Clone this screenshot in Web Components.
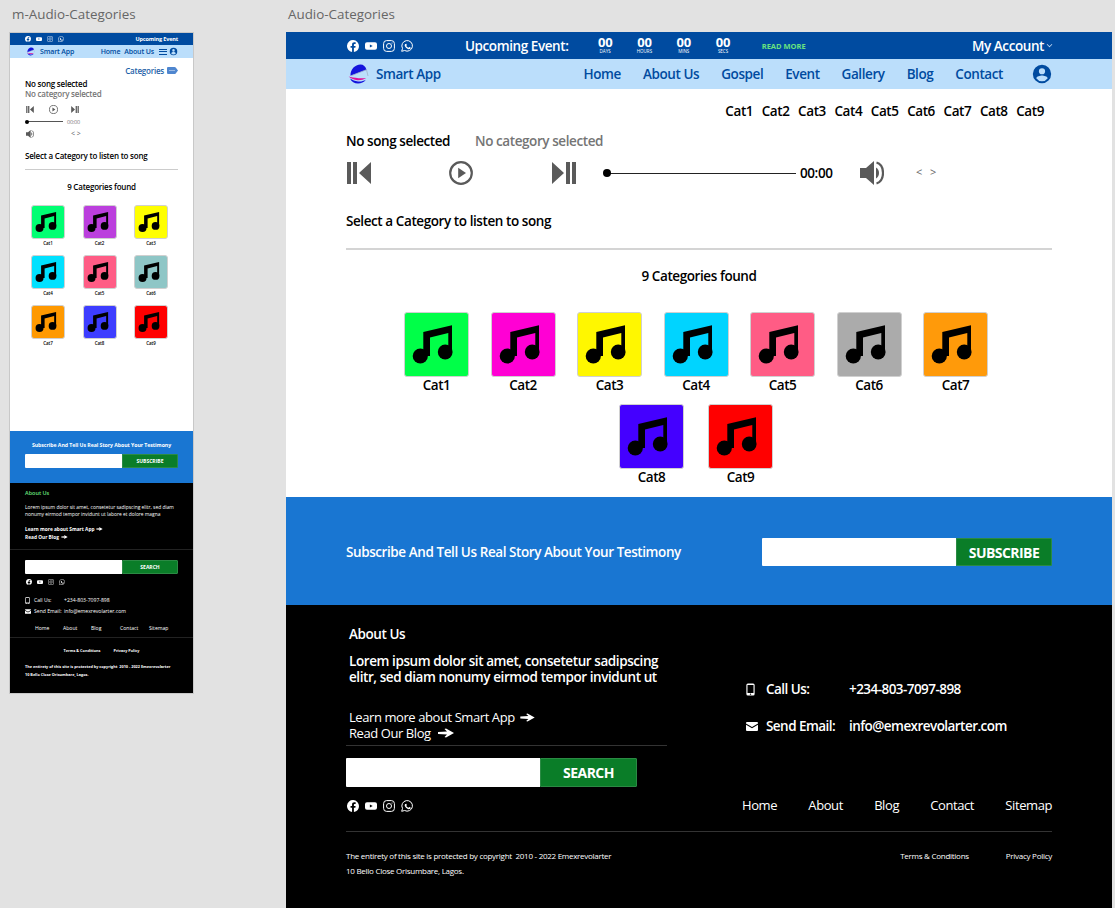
<!DOCTYPE html>
<html>
<head>
<meta charset="utf-8">
<title>Audio-Categories</title>
<style>
html, body { margin: 0; height: 908px; overflow: hidden; background: #e2e2e2; }
body { font-family: "Open Sans", "Noto Sans", sans-serif; }
</style>
</head>
<body>
<art-board></art-board>

<script>
const icons = {
    facebook: `<svg viewBox="0 0 24 24"><path fill="currentColor" d="M24 12a12 12 0 1 0-13.9 11.9v-8.4H7.1V12h3V9.400c0-3 1.800-4.700 4.500-4.700 1.300 0 2.700.2 2.700.2v3h-1.500c-1.500 0-2 .9-2 1.900V12h3.400l-.5 3.500h-2.900v8.400A12 12 0 0 0 24 12z"/></svg>`,
    youtube: `<svg viewBox="0 0 24 24"><path fill="currentColor" d="M4 4.500h16a4 4 0 0 1 4 4v7a4 4 0 0 1-4 4H4a4 4 0 0 1-4-4v-7a4 4 0 0 1 4-4z"/><path fill="var(--cut, #004ba0)" d="M9.800 8.800v6.400l5.600-3.200z"/></svg>`,
    instagram: `<svg viewBox="0 0 24 24" fill="none" stroke="currentColor" stroke-width="2"><rect x="1.200" y="1.200" width="21.600" height="21.600" rx="6"/><circle cx="12" cy="12" r="5"/><circle cx="18" cy="6" r="1.200" fill="currentColor" stroke="none"/></svg>`,
    whatsapp: `<svg viewBox="0 0 24 24"><path fill="none" stroke="currentColor" stroke-width="2" d="M1.400 22.600l1.600-5.800A10.600 10.600 0 1 1 7.200 21z"/><path fill="currentColor" d="M8.700 6.700c-.3 0-.8.100-1.200.6-.5.500-1.300 1.300-1.300 3s1.300 3.500 1.500 3.700c.2.200 2.500 4 6.300 5.400 3 1.100 3.700.5 4.400.4.700-.1 2.200-.9 2.500-1.800.3-.9.300-1.600.2-1.800-.1-.2-.3-.3-.7-.5l-2.400-1.200c-.3-.1-.6-.2-.8.200l-1.100 1.400c-.2.200-.4.300-.8.100-.4-.2-1.500-.6-2.900-1.800-1.100-1-1.800-2.100-2-2.500-.2-.4 0-.6.200-.8l.9-1.200c.1-.2.100-.4 0-.6l-1.100-2.600c-.3-.7-.5-.6-.7-.6z" transform="translate(2.400 2.400) scale(.8)"/></svg>`,
    user: `<svg viewBox="0 0 24 24"><path fill="currentColor" d="M12 2a10 10 0 1 0 0 20 10 10 0 0 0 0-20zm0 3.600a3.400 3.400 0 1 1 0 6.800 3.400 3.400 0 0 1 0-6.800zm0 14.200a7.800 7.800 0 0 1-6.300-3.300c.4-1.900 4.200-3 6.300-3s5.900 1.100 6.300 3a7.800 7.800 0 0 1-6.300 3.300z"/></svg>`,
    prev: `<svg viewBox="0 0 24 22"><path fill="currentColor" d="M0 0h4v22H0zM6 0h4v22H6zM24 0v22L12 11z"/></svg>`,
    next: `<svg viewBox="0 0 24 22"><path fill="currentColor" d="M0 0v22l12-11zM14 0h4v22h-4zM20 0h4v22h-4z"/></svg>`,
    play: `<svg viewBox="0 0 24 24"><circle cx="12" cy="12" r="10.800" fill="none" stroke="currentColor" stroke-width="2.200"/><path fill="currentColor" d="M9.200 6.800v10.400l7.800-5.200z"/></svg>`,
    volume: `<svg viewBox="0 0 24 24"><path fill="currentColor" d="M0 7h6l8-7v24l-8-7H0z"/><path fill="currentColor" d="M16 6.500c1.900 1.100 3 3.100 3 5.500s-1.100 4.400-3 5.500z"/><path fill="none" stroke="currentColor" stroke-width="2.200" d="M16.500 1.500c4.400 1.300 6.500 5.500 6.500 10.500s-2.100 9.200-6.500 10.500"/></svg>`,
    phone: `<svg viewBox="0 0 12 16"><path fill="currentColor" fill-rule="evenodd" d="M2.500 0h7A2 2 0 0 1 11.500 2v12a2 2 0 0 1-2 2h-7a2 2 0 0 1-2-2V2a2 2 0 0 1 2-2zM2 2v10.500h8V2zM6 13.300a.9.9 0 1 0 0 1.800.9.900 0 0 0 0-1.800z"/></svg>`,
    mail: `<svg viewBox="0 0 24 18"><path fill="currentColor" d="M2 0h20a2 2 0 0 1 2 2v.8L12 10 0 2.800V2a2 2 0 0 1 2-2zM0 5.500l12 7.200 12-7.200V16a2 2 0 0 1-2 2H2a2 2 0 0 1-2-2z"/></svg>`,
    arrow: `<svg viewBox="0 0 16 10"><path fill="currentColor" d="M0 4l9-.6L6.500 1 8 .6 16 5 8 9.400 6.500 9 9 6.600 0 6z"/></svg>`,
    note: `<svg viewBox="0 0 65 65"><path fill="#000" d="M19.300 44V20l28.700-6.700V40h-3.700V21L26 25.600V44z"/><circle cx="16.300" cy="44" r="7.600"/><circle cx="41.200" cy="40" r="7.400"/></svg>`,
    logo: `<svg viewBox="0 0 22 22"><path fill="#1414dc" d="M3.500 12.800C3 6.500 8 1.500 13.500 1.500c3 0 5 2 6 5.200z"/><path fill="none" stroke="#9fb0c8" stroke-width=".8" d="M4 12.800l15.500-6.100L21 13"/><path fill="#1414dc" d="M3 15.500c1.500 3.200 4.500 5 8 5 3.200 0 6-1.300 7.800-3.800-2.400 1.400-5 2-7.800 1.700-3-.3-5.500-1.300-8-2.900z"/><path fill="#e0109a" d="M1.600 13.600c2.600 2.200 5.600 3.400 8.800 3.600 3 .2 6-.4 8.800-2.200-2 .2-4.800.4-7.600.2-4-.3-7.800-.9-10-1.600z"/></svg>`,
    tag: `<svg viewBox="0 0 22 14"><path fill="#4f86cf" d="M2 0h13c1 0 1.800.4 2.400 1.200L22 7l-4.600 5.800c-.6.800-1.400 1.200-2.400 1.200H2a2 2 0 0 1-2-2V2a2 2 0 0 1 2-2z"/><circle cx="6" cy="7" r="1.100" fill="#fff"/><circle cx="10" cy="7" r="1.100" fill="#fff"/><circle cx="14" cy="7" r="1.100" fill="#fff"/></svg>`,
}

class AppIcon extends HTMLElement {
    constructor() {
        super()
        this.root = this.attachShadow({mode: 'open'})
    }
    connectedCallback() {
        const size = this.getAttribute('size') || 12
        const height = this.getAttribute('height') || size
        this.root.innerHTML = `
            <style>
            :host { display: block; flex: none; width: ${size}px; height: ${height}px; }
            svg { display: block; width: 100%; height: 100%; }
            </style>
            ${icons[this.getAttribute('name')]}
        `
    }
}
customElements.define('app-icon', AppIcon)

class SocialRow extends HTMLElement {
    constructor() {
        super()
        this.root = this.attachShadow({mode: 'open'})
    }
    connectedCallback() {
        const size = this.getAttribute('size') || 12
        const gap = this.getAttribute('gap') || 6
        this.root.innerHTML = `
            <style>
            :host { display: flex; gap: ${gap}px; align-items: center; color: #fff; }
            </style>
            <app-icon name="facebook" size="${size}"></app-icon>
            <app-icon name="youtube" size="${size}"></app-icon>
            <app-icon name="instagram" size="${size}"></app-icon>
            <app-icon name="whatsapp" size="${size}"></app-icon>
        `
    }
}
customElements.define('social-row', SocialRow)

class MusicTile extends HTMLElement {
    constructor() {
        super()
        this.root = this.attachShadow({mode: 'open'})
    }
    connectedCallback() {
        const size = Number(this.getAttribute('size')) || 65
        const font = this.getAttribute('font') || 13.5
        const gap = this.getAttribute('gap') || 0
        this.root.innerHTML = `
            <style>
            :host { display: flex; flex-direction: column; align-items: center; width: ${size}px; color: #000; }
            .box {
                box-sizing: border-box; width: ${size}px; height: ${size}px;
                background: ${this.getAttribute('color')};
                border: 1px solid #d0d0d0; border-radius: 3px;
                display: flex; align-items: center; justify-content: center;
            }
            .label { font-size: ${font}px; font-weight: 600; line-height: 16px; margin-top: ${gap}px; white-space: nowrap; letter-spacing: -.45px; }
            :host([size]) .label { line-height: 6.500px; letter-spacing: -.1px; }
            </style>
            <div class="box"><app-icon name="note" size="${size}"></app-icon></div>
            <div class="label"><slot></slot></div>
        `
    }
}
customElements.define('music-tile', MusicTile)

class SignupBox extends HTMLElement {
    constructor() {
        super()
        this.root = this.attachShadow({mode: 'open'})
    }
    connectedCallback() {
        const height = this.getAttribute('height') || 28
        const input = this.getAttribute('input') || 194
        const button = this.getAttribute('button') || 96
        const font = this.getAttribute('font') || 14
        this.root.innerHTML = `
            <style>
            :host { display: flex; flex: none; height: ${height}px; width: ${Number(input) + Number(button)}px; }
            .field { width: ${input}px; background: #fff; border-radius: 1px 0 0 1px; }
            .btn {
                width: ${button}px; box-sizing: border-box; background: #0a7d28; color: #fff;
                font-size: ${font}px; font-weight: 700; letter-spacing: ${font < 10 ? 0 : -.55}px;
                display: flex; align-items: center; justify-content: center;
                border-radius: 0 1px 1px 0; border: 1px solid #2b8a44;
            }
            </style>
            <div class="field"></div>
            <div class="btn"><slot></slot></div>
        `
    }
}
customElements.define('signup-box', SignupBox)

const deskStyles = `
:host {
    display: flex; flex-direction: column; width: 826px; height: 876px; flex: none;
    font-size: 13.500px; font-weight: 600; letter-spacing: -.42px; color: #000; background: #fff;
}
.top { height: 27px; background: #004ba0; color: #fff; display: flex; align-items: center; padding: 0 60px 0 61px; }
.event { margin-left: 52px; width: 120.500px; white-space: nowrap; }
.count { display: flex; }
.count div { width: 39.300px; text-align: center; font-size: 13px; font-weight: 700; line-height: 11px; letter-spacing: -.2px; margin-top: -1px; }
.count small { display: block; font-size: 4.500px; font-weight: 400; line-height: 6px; letter-spacing: 0; }
.read { margin-left: 19px; font-size: 7.500px; font-weight: 700; color: #69e27f; letter-spacing: 0; white-space: nowrap; }
.account { margin-left: auto; display: flex; align-items: center; gap: 3px; white-space: nowrap; }
.chev { width: 4px; height: 4px; border: solid #cfe0f5; border-width: 0 1px 1px 0; transform: rotate(45deg) scale(.8); margin-top: -2px; }
.nav { height: 30px; background: #bbdefb; color: #004ba0; display: flex; align-items: center; padding: 0 60px 0 61px; }
.brand { display: flex; align-items: center; gap: 7px; white-space: nowrap; }
.links { margin-left: auto; display: flex; gap: 22px; margin-right: 28px; white-space: nowrap; }
.nav app-icon[name=user] { margin-right: -1px; }
.main { height: 408px; box-sizing: border-box; padding: 0 60px; display: flex; flex-direction: column; }
.cats { display: flex; justify-content: flex-end; gap: 8.600px; padding: 14px 8px 0 0; line-height: 16px; height: 28px; box-sizing: content-box; }
.song { display: flex; height: 20px; line-height: 20px; }
.song span { width: 129px; }
.song .grey { color: #757575; width: auto; }
.player { display: flex; align-items: center; height: 24px; margin-top: 10px; color: #5a5a5a; padding-left: 1px; }
.track { width: 189px; height: 1px; background: #222; position: relative; }
.track::before { content: ""; position: absolute; left: -4px; top: -4px; width: 8px; height: 8px; border-radius: 50%; background: #000; }
.time { margin-left: 4px; color: #000; width: 60px; }
.arrows { margin-left: 32px; font-size: 11px; color: #666; display: flex; gap: 8px; font-weight: 400; line-height: 9px; margin-top: -4px; }
.pick { margin-top: 26px; line-height: 20px; }
.rule { height: 2px; background: #d4d4d4; margin-top: 17px; }
.found { text-align: center; margin-top: 16px; line-height: 20px; }
.row { display: flex; justify-content: center; margin-right: 6px; }
.row.a { gap: 21.500px; margin-top: 26px; }
.row.b { gap: 24px; margin-top: 11px; }
.subs { height: 108px; box-sizing: border-box; padding: 2px 60px 0; background: #1976d2; color: #fff; display: flex; align-items: center; justify-content: space-between; white-space: nowrap; }
.foot { flex: 1; background: #000; color: #fff; padding: 0 60px; min-height: 0; }
.cols { display: flex; height: 226px; justify-content: space-between; }
.left { width: 321px; display: flex; flex-direction: column; }
.left .in { padding-left: 3px; }
.about { margin-top: 21px; line-height: 16px; }
.lorem { margin-top: 11px; line-height: 16px; white-space: nowrap; }
.more { margin-top: 24px; line-height: 16px; font-size: 13px; font-weight: 400; }
.more div { display: flex; align-items: center; gap: 5px; white-space: nowrap; }
.more div + div { gap: 6px; }
.left .rule2 { height: 1px; background: #333; margin-top: 4px; }
.left signup-box { margin-top: 12px; }
.left social-row { --cut: #000; margin-top: 13px; margin-left: 1px; }
.right { width: 306px; display: flex; flex-direction: column; }
.contact { display: grid; grid-template-columns: 20px 83px auto; align-items: center; row-gap: 21px; margin-top: 76px; line-height: 16px; white-space: nowrap; letter-spacing: -.55px; }
.fnav { margin: auto 0 18px -4px; display: flex; justify-content: space-between; font-size: 13px; font-weight: 400; line-height: 16px; }
.legal { border-top: 1px solid #333; display: flex; justify-content: space-between; font-size: 8px; font-weight: 400; letter-spacing: -.27px; padding-top: 16px; line-height: 15px; white-space: nowrap; }
.terms { display: flex; gap: 37px; }
`

class DeskFrame extends HTMLElement {
    constructor() {
        super()
        this.root = this.attachShadow({mode: 'open'})
    }
    connectedCallback() {
        const colors = ['#00ff48', '#ff00d4', '#fff700', '#00d4ff', '#ff5c85', '#ababab', '#ff9a0a', '#4400ff', '#ff0000']
        const tile = i => `<music-tile color="${colors[i]}">Cat${i + 1}</music-tile>`
        this.root.innerHTML = `
            <style>${deskStyles}</style>
            <div class="top">
                <social-row size="12" gap="6"></social-row>
                <div class="event">Upcoming Event:</div>
                <div class="count">
                    <div>00<small>DAYS</small></div><div>00<small>HOURS</small></div><div>00<small>MINS</small></div><div>00<small>SECS</small></div>
                </div>
                <div class="read">READ MORE</div>
                <div class="account">My Account<span class="chev"></span></div>
            </div>
            <div class="nav">
                <div class="brand"><app-icon name="logo" size="22"></app-icon>Smart App</div>
                <div class="links"><span>Home</span><span>About Us</span><span>Gospel</span><span>Event</span><span>Gallery</span><span>Blog</span><span>Contact</span></div>
                <app-icon name="user" size="22"></app-icon>
            </div>
            <div class="main">
                <div class="cats"><span>Cat1</span><span>Cat2</span><span>Cat3</span><span>Cat4</span><span>Cat5</span><span>Cat6</span><span>Cat7</span><span>Cat8</span><span>Cat9</span></div>
                <div class="song"><span>No song selected</span><span class="grey">No category selected</span></div>
                <div class="player">
                    <app-icon name="prev" size="24" height="22"></app-icon>
                    <app-icon name="play" size="24" style="margin-left:78px"></app-icon>
                    <app-icon name="next" size="24" height="22" style="margin-left:79px"></app-icon>
                    <div class="track" style="margin-left:31px"></div>
                    <div class="time">00:00</div>
                    <app-icon name="volume" size="24"></app-icon>
                    <div class="arrows"><span>&lt;</span><span>&gt;</span></div>
                </div>
                <div class="pick">Select a Category to listen to song</div>
                <div class="rule"></div>
                <div class="found">9 Categories found</div>
                <div class="row a">${[0, 1, 2, 3, 4, 5, 6].map(tile).join('')}</div>
                <div class="row b">${[7, 8].map(tile).join('')}</div>
            </div>
            <div class="subs">
                <span>Subscribe And Tell Us Real Story About Your Testimony</span>
                <signup-box input="194" button="96" height="28">SUBSCRIBE</signup-box>
            </div>
            <div class="foot">
                <div class="cols">
                    <div class="left">
                        <div class="about in">About Us</div>
                        <div class="lorem in">Lorem ipsum dolor sit amet, consetetur sadipscing<br>elitr, sed diam nonumy eirmod tempor invidunt ut</div>
                        <div class="more in">
                            <div>Learn more about Smart App <app-icon name="arrow" size="15" height="9"></app-icon></div>
                            <div>Read Our Blog <app-icon name="arrow" size="18" height="10"></app-icon></div>
                        </div>
                        <div class="rule2"></div>
                        <signup-box input="194" button="97" height="29">SEARCH</signup-box>
                        <social-row size="12" gap="6"></social-row>
                    </div>
                    <div class="right">
                        <div class="contact">
                            <app-icon name="phone" size="9" height="13"></app-icon><span>Call Us:</span><span>+234-803-7097-898</span>
                            <app-icon name="mail" size="12" height="9"></app-icon><span>Send Email:</span><span>info@emexrevolarter.com</span>
                        </div>
                        <div class="fnav"><span>Home</span><span>About</span><span>Blog</span><span>Contact</span><span>Sitemap</span></div>
                    </div>
                </div>
                <div class="legal">
                    <div>The entirety of this site is protected by copyright &nbsp;2010 - 2022 Emexrevolarter<br>10 Bello Close Orisumbare, Lagos.</div>
                    <div class="terms"><span>Terms &amp; Conditions</span><span>Privacy Policy</span></div>
                </div>
            </div>
        `
    }
}
customElements.define('desk-frame', DeskFrame)

const phoneStyles = `
:host {
    display: flex; flex-direction: column; box-sizing: border-box; width: 185px; height: 662px; flex: none;
    border: 1px solid #c8c8c8; background: #fff; color: #000;
    font-size: 8px; font-weight: 600; letter-spacing: -.22px;
}
.top { height: 12px; background: #004ba0; color: #fff; display: flex; align-items: center; justify-content: space-between; padding: 0 15px; font-size: 5.500px; font-weight: 700; letter-spacing: -.15px; white-space: nowrap; }
.nav { height: 13px; background: #bbdefb; color: #004ba0; display: flex; align-items: center; padding: 0 15px 0 16px; white-space: nowrap; }
.brand { display: flex; align-items: center; gap: 5px; font-size: 7px; letter-spacing: -.15px; }
.links { margin-left: auto; display: flex; align-items: center; gap: 4px; font-size: 7px; letter-spacing: -.15px; }
.links app-icon { margin-left: -2px; }
.burger { width: 8px; height: 6px; border-top: 1px solid #004ba0; border-bottom: 1px solid #004ba0; position: relative; box-sizing: border-box; margin-left: 1px; }
.burger::after { content: ""; position: absolute; left: 0; right: 0; top: 1.500px; height: 1px; background: #004ba0; }
.main { height: 373px; box-sizing: border-box; padding: 0 15px; display: flex; flex-direction: column; }
.catlink { display: flex; justify-content: flex-end; align-items: center; gap: 3px; color: #1e5fa8; height: 10px; margin-top: 7px; }
.song { margin-top: 4px; line-height: 10px; }
.grey { color: #757575; }
.ctl { display: flex; align-items: center; color: #5a5a5a; margin-top: 6px; height: 9px; padding-left: 1px; }
.slide { display: flex; align-items: center; margin-top: 3px; height: 9px; padding-left: 1px; }
.track { width: 37px; height: 1px; background: #555; position: relative; }
.track::before { content: ""; position: absolute; left: -1px; top: -1.500px; width: 4px; height: 4px; border-radius: 50%; background: #000; }
.time { margin-left: 4px; font-size: 5.500px; color: #777; font-weight: 400; }
.vol { display: flex; align-items: center; margin-top: 3px; height: 9px; color: #5a5a5a; padding-left: 1px; }
.vol span { margin-left: 37px; font-size: 7px; font-weight: 400; letter-spacing: 0; }
.pick { margin-top: 13px; line-height: 10px; }
.rule { height: 1px; background: #ccc; margin-top: 8px; }
.found { text-align: center; margin-top: 12px; line-height: 10px; }
.grid { display: grid; grid-template-columns: repeat(3, 34px); column-gap: 17.500px; row-gap: 8.500px; margin: 13px 0 0 6px; }
.subs { height: 52px; box-sizing: border-box; background: #1976d2; color: #fff; padding: 10px 15px 0; font-size: 5.200px; font-weight: 700; letter-spacing: -.05px; text-align: center; white-space: nowrap; line-height: 8px; }
.subs signup-box { margin-top: 5px; }
.foot { flex: 1; background: #000; color: #fff; font-size: 5.100px; font-weight: 400; letter-spacing: 0; }
.about { padding: 6px 15px 0; height: 67px; box-sizing: border-box; border-bottom: 1px solid #222; }
.about h4 { margin: 0; color: #69e27f; font-size: 5.500px; font-weight: 600; line-height: 8px; }
.about p { margin: 7px 0 0; font-size: 4.900px; line-height: 7px; white-space: nowrap; }
.more { margin-top: 7px; font-size: 4.800px; font-weight: 700; line-height: 8px; }
.more div { display: flex; gap: 2px; align-items: center; white-space: nowrap; }
.mid { padding: 10px 15px 0; height: 88px; box-sizing: border-box; border-bottom: 1px solid #222; }
.mid social-row { --cut: #000; margin: 5px 0 0 1px; }
.contact { display: grid; grid-template-columns: 9px 30px auto; align-items: center; row-gap: 3px; margin-top: 11px; line-height: 8px; white-space: nowrap; }
.fnav { display: flex; margin: 9px 0 0 10px; line-height: 8px; }
.fnav span { width: 14px; margin-right: 14px; white-space: nowrap; }
.fnav span:nth-child(3) { width: 11px; margin-right: 18px; }
.fnav span:nth-child(4) { width: 18px; margin-right: 11px; }
.terms { display: flex; justify-content: center; gap: 13px; font-size: 3.800px; font-weight: 700; margin-top: 10px; line-height: 6px; }
.legal { padding: 9px 15px 0; font-size: 3.800px; font-weight: 700; line-height: 8px; white-space: nowrap; }
`

class PhoneFrame extends HTMLElement {
    constructor() {
        super()
        this.root = this.attachShadow({mode: 'open'})
    }
    connectedCallback() {
        const colors = ['#00ff73', '#bb3fdd', '#ffff00', '#00e1ff', '#ff5c85', '#8ec6c6', '#ff9900', '#3d3dff', '#ff0000']
        const tiles = colors.map((c, i) => `<music-tile size="34" font="4.500" gap="1" color="${c}">Cat${i + 1}</music-tile>`).join('')
        this.root.innerHTML = `
            <style>${phoneStyles}</style>
            <div class="top"><social-row size="6" gap="5"></social-row><span>Upcoming Event</span></div>
            <div class="nav">
                <div class="brand"><app-icon name="logo" size="9"></app-icon>Smart App</div>
                <div class="links"><span>Home</span><span>About Us</span><span class="burger"></span><app-icon name="user" size="9"></app-icon></div>
            </div>
            <div class="main">
                <div class="catlink">Categories <app-icon name="tag" size="11" height="7"></app-icon></div>
                <div class="song">No song selected<br><span class="grey">No category selected</span></div>
                <div class="ctl">
                    <app-icon name="prev" size="8" height="7"></app-icon>
                    <app-icon name="play" size="9" style="margin-left:15px"></app-icon>
                    <app-icon name="next" size="8" height="7" style="margin-left:13px"></app-icon>
                </div>
                <div class="slide"><div class="track"></div><div class="time">00:00</div></div>
                <div class="vol"><app-icon name="volume" size="8"></app-icon><span>&lt; &gt;</span></div>
                <div class="pick">Select a Category to listen to song</div>
                <div class="rule"></div>
                <div class="found">9 Categories found</div>
                <div class="grid">${tiles}</div>
            </div>
            <div class="subs">
                Subscribe And Tell Us Real Story About Your Testimony
                <signup-box input="97" button="56" height="14" font="5">SUBSCRIBE</signup-box>
            </div>
            <div class="foot">
                <div class="about">
                    <h4>About Us</h4>
                    <p>Lorem ipsum dolor sit amet, consetetur sadipscing elitr, sed diam<br>nonumy eirmod tempor invidunt ut labore et dolore magna</p>
                    <div class="more">
                        <div>Learn more about Smart App <app-icon name="arrow" size="7" height="4"></app-icon></div>
                        <div>Read Our Blog <app-icon name="arrow" size="7" height="4"></app-icon></div>
                    </div>
                </div>
                <div class="mid">
                    <signup-box input="97" button="56" height="14" font="5">SEARCH</signup-box>
                    <social-row size="6" gap="5"></social-row>
                    <div class="contact">
                        <app-icon name="phone" size="5" height="7"></app-icon><span>Call Us:</span><span>+234-803-7097-898</span>
                        <app-icon name="mail" size="6" height="5"></app-icon><span>Send Email:</span><span>info@emexrevolarter.com</span>
                    </div>
                    <div class="fnav"><span>Home</span><span>About</span><span>Blog</span><span>Contact</span><span>Sitemap</span></div>
                </div>
                <div class="terms"><span>Terms &amp; Conditions</span><span>Privacy Policy</span></div>
                <div class="legal">The entirety of this site is protected by copyright &nbsp;2010 - 2022 Emexrevolarter<br>10 Bello Close Orisumbare, Lagos.</div>
            </div>
        `
    }
}
customElements.define('phone-frame', PhoneFrame)

class ArtBoard extends HTMLElement {
    constructor() {
        super()
        this.root = this.attachShadow({mode: 'open'})
    }
    connectedCallback() {
        this.root.innerHTML = `
            <style>
            :host { display: flex; align-items: flex-start; height: 908px; overflow: hidden; padding-left: 9px; box-sizing: border-box; }
            .col { display: flex; flex-direction: column; flex: none; }
            .name { font-size: 13.400px; line-height: 18px; height: 18px; margin: 5px 0 9px 3px; color: #666; white-space: nowrap; }
            .desk { margin-left: 92px; }
            .desk .name { margin-left: 2px; }
            </style>
            <div class="col"><div class="name">m-Audio-Categories</div><phone-frame></phone-frame></div>
            <div class="col desk"><div class="name">Audio-Categories</div><desk-frame></desk-frame></div>
        `
    }
}
customElements.define('art-board', ArtBoard)
</script>
</body>
</html>
